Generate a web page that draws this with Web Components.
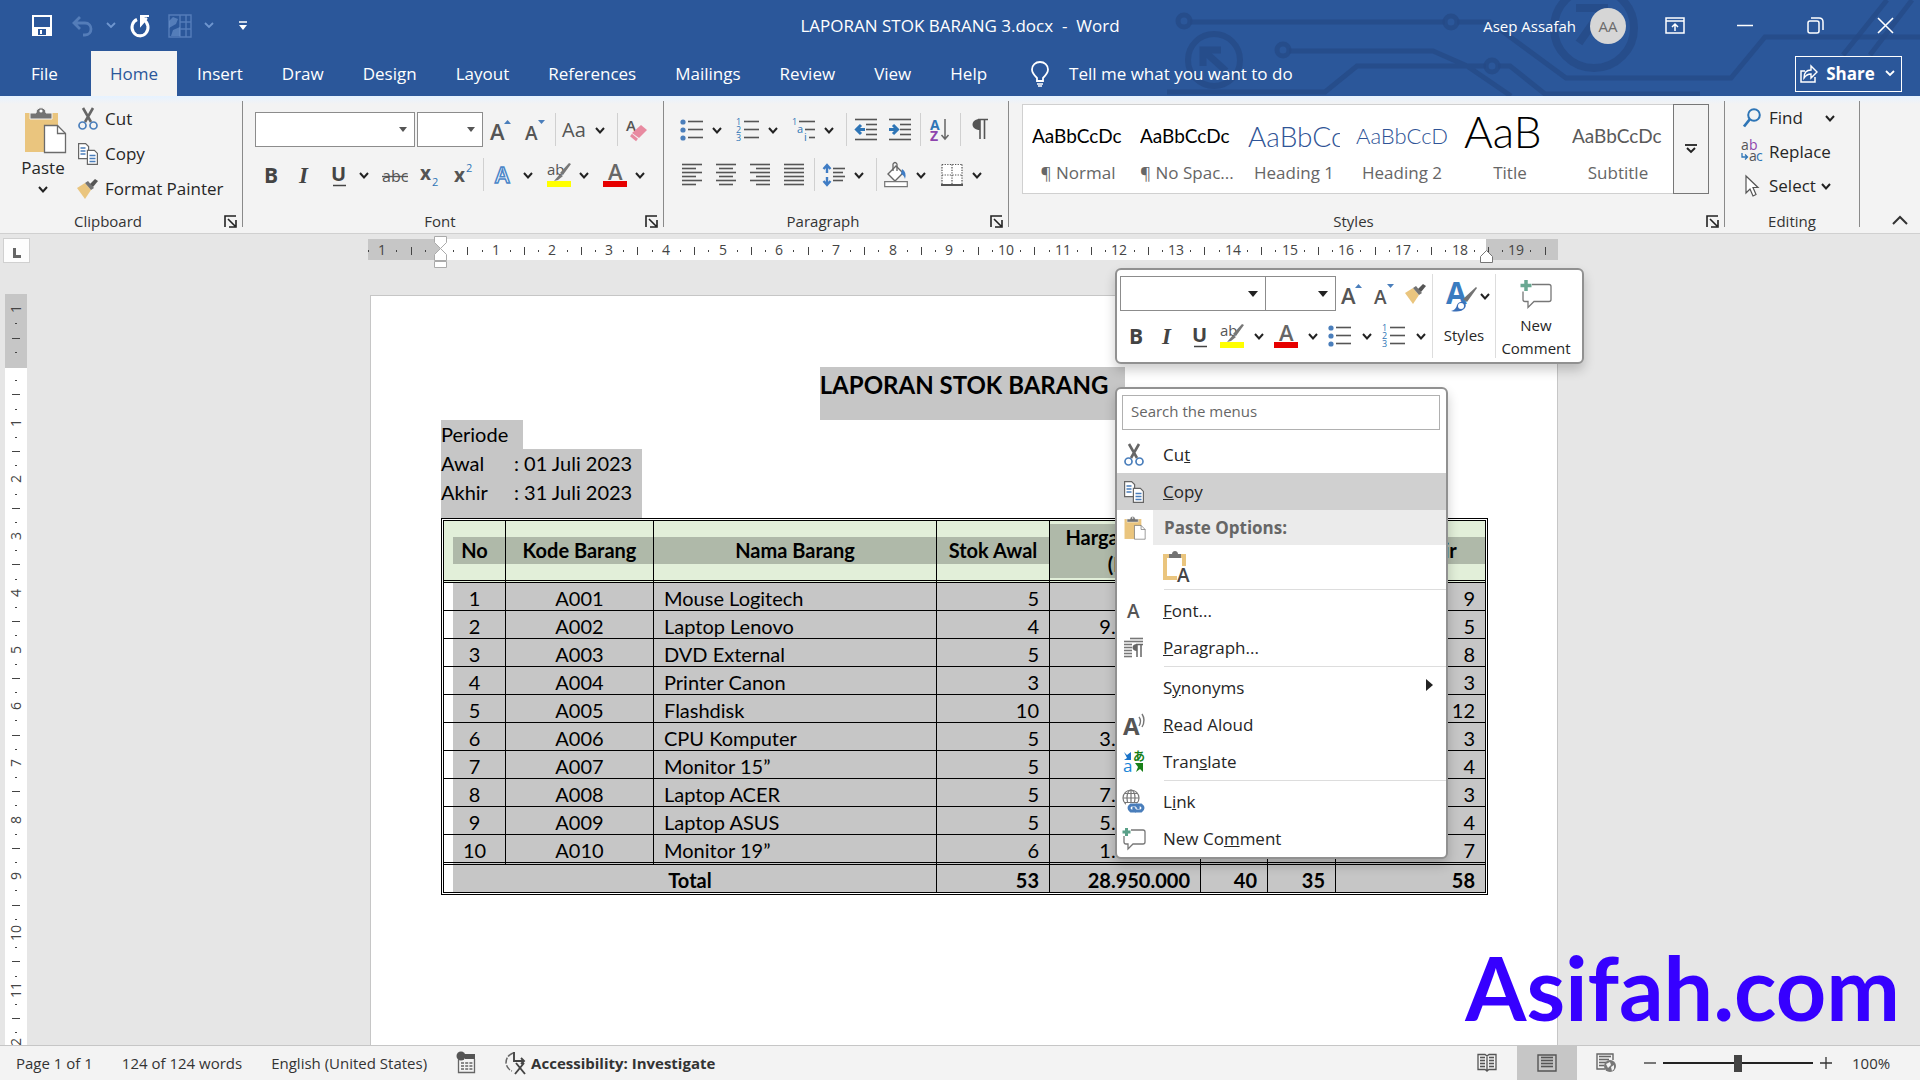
<!DOCTYPE html>
<html lang="en">
<head>
<meta charset="utf-8">
<title>LAPORAN STOK BARANG 3.docx - Word</title>
<style>
html, body { height: 100%; margin: 0; }
body { font: 17px/24px "Open Sans", "Noto Sans", sans-serif; color: #262626; overflow: hidden; }
</style>
</head>
<body>
<word-app></word-app>
<script>
const chevron = c => `<path d="M2 2l5 5 5-5" fill="none" stroke="${c}" stroke-width="2.2"/>`;
const lines = (rows, c = '#555') => rows.map(r => `<path d="M${r[0]} ${r[2]}.5H${r[1]}" stroke="${c}" stroke-width="1.6"/>`).join('');
const txt = (x, y, s, t, extra = '') => `<text x="${x}" y="${y}" font-size="${s}" ${extra}>${t}</text>`;
const clipboard = `<path d="M1 6h33v39H1z" fill="#eac57e"/><path d="M6 12V6h6c0-7 10-7 10 0h6v6z" fill="#737373" stroke="#f3f3f3" stroke-width="1"/><circle cx="17" cy="4" r="1.6" fill="#fff"/><path d="M20.500 18.500h13l8 8v19h-21z" fill="#fff" stroke="#6b6b6b" stroke-width="1.300"/><path d="M33.500 18.500v8h8" fill="none" stroke="#6b6b6b" stroke-width="1.300"/>`;

/* name: [width, height, drawing] */
const ICONS = {
  save: [20, 21, '<path d="M1 1h18v19H1z" fill="none" stroke="#fff" stroke-width="2"/><path d="M1 12h18v8H1z" fill="#fff"/><path d="M6 14h8v6H6z" fill="#2b579a"/><path d="M8 15h2v4H8z" fill="#fff"/>'],
  undo: [22, 22, '<path d="M3 8h11c8 0 8 12 0 12h-2M9 2L3 8l6 6" fill="none" stroke="#6f96cf" stroke-width="2.8" opacity=".6"/>'],
  redo: [20, 22, '<path d="M7 4.500A8 8.500 0 1 0 14 5" fill="none" stroke="#fff" stroke-width="3"/><path d="M10 1h9M11 1v9l6-7" fill="#fff" stroke="#fff" stroke-width="2"/>'],
  pages: [24, 24, '<g fill="none" stroke="#6f96cf" stroke-width="1.400" opacity=".6"><path d="M1 1h11v22H1zM12 1h11v22H12zM12 8h11M12 15h11M18 1v22"/></g><path d="M1 7l4-4 5 2-2 5-7 4zM3 22l2-6 7-3v9z" fill="#6f96cf" opacity=".6"/>'],
  customise: [8, 10, '<path d="M0 1h8" stroke="#fff" stroke-width="1.500"/><path d="M0 4h8l-4 5z" fill="#fff"/>'],
  chevW: [14, 9, '<path d="M3 2l4 4 4-4" fill="none" stroke="#fff" stroke-width="1.800"/>'], chevF: [14, 9, '<path d="M3 2l4 4 4-4" fill="none" stroke="#6f96cf" stroke-width="1.800"/>'], chev: [14, 9, '<path d="M3 2l4 4.500 4-4.500" fill="none" stroke="#222" stroke-width="2"/>'],
  up: [16, 10, '<path d="M1 9l7-7 7 7" fill="none" stroke="#333" stroke-width="2"/>'],
  bulb: [18, 26, '<path d="M6 20v-3C3 14 1 12 1 8.500 1 4 4.500 1 9 1s8 3 8 7.500c0 3.500-2 5.500-5 8.500v3z" fill="none" stroke="#fff" stroke-width="1.800"/><path d="M6 23h6M7 25h4" stroke="#fff" stroke-width="1.500"/>'],
  ribbonopt: [20, 17, '<path d="M1 1h18v15H1zM1 4h18M10 14V7M7 10l3-3 3 3" fill="none" stroke="#fff" stroke-width="1.500"/>'],
  min: [16, 3, '<path d="M0 1.500h16" stroke="#fff" stroke-width="1.500"/>'],
  restore: [17, 17, '<rect x="1" y="4" width="11" height="12" rx="2" fill="none" stroke="#fff" stroke-width="1.500"/><path d="M4 1h8q4 0 4 4v8" fill="none" stroke="#fff" stroke-width="1.500"/>'],
  close: [17, 17, '<path d="M1 1l15 15M16 1L1 16" stroke="#fff" stroke-width="1.600"/>'],
  share: [18, 18, '<path d="M5 6H1v11h14v-5" fill="none" stroke="#fff" stroke-width="1.500"/><path d="M4 13c0-6 3-8 7-8V1l6 6-6 6V9c-3 0-5 1-7 4z" fill="none" stroke="#fff" stroke-width="1.400"/>'],
  paste: [42, 46, clipboard],
  pasteS: [22, 24, `<g transform="scale(.51)">${clipboard}</g>`],
  pasteA: [28, 32, '<path d="M3 5h19v22H3z" fill="#fff" stroke="#eac57e" stroke-width="4"/><path d="M7 7V3h3c0-4 6-4 6 0h3v4z" fill="#737373"/><path d="M15 15h13v17H15z" fill="#fff"/>' + txt(15, 31, 19, 'A', 'fill="#444" font-weight="600"')],
  cut: [20, 22, '<path d="M5 0l8 14M15 0L7 14" stroke="#666" stroke-width="2.600"/><circle cx="4.500" cy="17.500" r="3.500" fill="none" stroke="#4a7ebb" stroke-width="1.700"/><circle cx="15.500" cy="17.500" r="3.500" fill="none" stroke="#4a7ebb" stroke-width="1.700"/>'],
  copy: [20, 22, '<g fill="#fff" stroke="#666" stroke-width="1.200"><path d="M.6.600h7l3 3v12h-10z"/><path d="M9.400 7.400h7l3 3v11h-10z"/></g><path d="M2.500 5h5M2.500 8h5M2.500 11h5M11.500 12.500h6M11.500 15.500h6M11.500 18.500h6" stroke="#4a7ebb" stroke-width="1.300"/>'],
  painter: [22, 21, '<path d="M0 10l8-5 6 7-6 9z" fill="#eac57e"/><path d="M8 5l3-2 6 7-3 2z" fill="#737373"/><path d="M13 6l5-5 3 2-5 6z" fill="#555"/>'],
  grow: [22, 22, txt(0, 21, 22, 'A', 'fill="#555" font-weight="600"') + '<path d="M14 5h7l-3.500-4z" fill="#4a7ebb"/>'],
  shrink: [20, 22, txt(0, 21, 19, 'A', 'fill="#555" font-weight="600"') + '<path d="M13 1h7l-3.500 4z" fill="#4a7ebb"/>'],
  aa: [26, 22, txt(0, 18, 20, 'Aa', 'fill="#555"')],
  eraser: [22, 24, txt(0, 13, 15, 'A', 'fill="#555" font-weight="600"') + '<path d="M6 15L15 7l6 5-8 8z" fill="#e88aa0"/><path d="M5 17l6 5" stroke="#e88aa0" stroke-width="3"/>'],
  bold: [16, 22, txt(1, 19, 21, 'B', 'fill="#444" font-weight="700"')],
  italic: [14, 22, txt(1, 19, 23, 'I', 'fill="#444" font-weight="700" font-style="italic" font-family="Liberation Serif"')],
  under: [18, 24, txt(1, 18, 20, 'U', 'fill="#444" font-weight="700"') + '<path d="M3 22.500h13" stroke="#444" stroke-width="1.500"/>'],
  strike: [26, 22, txt(0, 18, 16, 'abc', 'fill="#555"') + '<path d="M0 12.500h26" stroke="#555" stroke-width="1.400"/>'],
  sub: [18, 24, txt(0, 17, 19, 'x', 'fill="#555" font-weight="700"') + txt(12, 23, 11, '2', 'fill="#2e75b6"')],
  sup: [18, 24, txt(0, 19, 19, 'x', 'fill="#555" font-weight="700"') + txt(12, 9, 11, '2', 'fill="#2e75b6"')],
  effect: [16, 24, txt(0, 20, 22, 'A', 'fill="#fff" stroke="#4a86c8" stroke-width="1.500" font-weight="600"')],
  hilite: [24, 26, txt(0, 13, 15, 'ab', 'fill="#555"') + '<path d="M24 2L16 13l-3-2 9-10z" fill="#777"/><path d="M13 12l3 2-5 4-4 1z" fill="#777"/><path d="M0 19h24v6H0z" fill="#ff0"/>'],
  fcolor: [24, 26, txt(5, 18, 22, 'A', 'fill="#666" font-weight="600"') + '<path d="M0 19h24v6H0z" fill="#e60000"/>'],
  bullets: [24, 24, '<g fill="#4a7ebb"><circle cx="3" cy="4" r="2.600"/><circle cx="3" cy="12" r="2.600"/><circle cx="3" cy="20" r="2.600"/></g>' + lines([[8, 23, 3], [8, 23, 11], [8, 23, 19]])],
  numbers: [24, 24, `<g fill="#2e75b6">${txt(0, 7, 9, '1') + txt(0, 15, 9, '2') + txt(0, 23, 9, '3')}</g>` + lines([[8, 23, 3], [8, 23, 11], [8, 23, 19]])],
  multi: [24, 24, `<g fill="#2e75b6">${txt(0, 7, 9, '1') + txt(5, 15, 11, 'a') + txt(12, 23, 11, 'i')}</g>` + lines([[7, 23, 3], [13, 23, 11], [17, 23, 19]])],
  outdent: [22, 24, lines([[0, 22, 1], [11, 22, 6], [11, 22, 11], [11, 22, 16], [0, 22, 21]]) + '<path d="M10 11.500H3M6 7l-4.500 4.500L6 16" fill="none" stroke="#2e75b6" stroke-width="3"/>'],
  indent: [22, 24, lines([[0, 22, 1], [11, 22, 6], [11, 22, 11], [11, 22, 16], [0, 22, 21]]) + '<path d="M0 11.500h7M4 7l4.500 4.500L4 16" fill="none" stroke="#2e75b6" stroke-width="3"/>'],
  sort: [20, 24, txt(0, 12, 14, 'A', 'fill="#2e75b6" font-weight="700"') + txt(0, 23, 14, 'Z', 'fill="#8e44ad" font-weight="700"') + '<path d="M15 1v20M11.500 17l3.500 4 3.500-4" fill="none" stroke="#666" stroke-width="1.500"/>'],
  pilcrow: [18, 24, '<path d="M7 1.500h10M9 1v20M13.500 1v20" stroke="#555" stroke-width="1.600"/><path d="M9 1C-1 1-1 12 9 12z" fill="#555"/>'],
  left: [20, 24, lines([[0, 20, 1], [0, 14, 5], [0, 20, 9], [0, 14, 13], [0, 20, 17], [0, 14, 21]])],
  center: [20, 24, lines([[0, 20, 1], [3, 17, 5], [0, 20, 9], [3, 17, 13], [0, 20, 17], [3, 17, 21]])],
  right: [20, 24, lines([[0, 20, 1], [6, 20, 5], [0, 20, 9], [6, 20, 13], [0, 20, 17], [6, 20, 21]])],
  justify: [20, 24, lines([[0, 20, 1], [0, 20, 5], [0, 20, 9], [0, 20, 13], [0, 20, 17], [0, 20, 21]])],
  spacing: [24, 24, '<path d="M5 2v8M5 14v8M1.500 6L5 2l3.500 4M1.500 18L5 22l3.500-4" fill="none" stroke="#3f7cc4" stroke-width="2.400"/>' + lines([[11, 23, 5], [11, 21, 9], [11, 23, 13], [11, 21, 17]])],
  bucket: [24, 26, '<path d="M4 12l8-8 7 7-8 8z" fill="#fff" stroke="#666" stroke-width="1.400"/><path d="M9 9V2q2-3 4 0v7" fill="none" stroke="#666" stroke-width="1.300"/><path d="M18 7q5 3 3 10-1-4-4-5z" fill="#3f7cc4"/><path d="M.700 19.700h22.600v5H.700z" fill="#fff" stroke="#777" stroke-width="1.200"/>'],
  borders: [22, 24, '<path d="M1 1h20v20H1z" fill="#fff"/><path d="M1 1.500h20M1 12h20M1 1.500v20M11 1.500v20M21 1.500v20" stroke="#555" stroke-width="1.200" stroke-dasharray="1.300 1.300"/><path d="M0 22h22" stroke="#555" stroke-width="2"/>'],
  launcher: [13, 13, '<path d="M1 12V1h11M4 4l7 7M12 5v7H5" fill="none" stroke="#222" stroke-width="1.600"/>'],
  more: [12, 10, '<path d="M0 1h12" stroke="#222" stroke-width="1.800"/><path d="M2 4l4 4 4-4" fill="none" stroke="#222" stroke-width="1.900"/>'],
  find: [18, 20, '<circle cx="11" cy="7" r="5.800" fill="none" stroke="#2e75b6" stroke-width="2"/><path d="M7 11l-6 7.500" stroke="#2e75b6" stroke-width="2.800"/>'],
  replace: [22, 24, txt(0, 10, 14, 'a', 'fill="#555"') + txt(8, 10, 14, 'b', 'fill="#8e44ad"') + txt(8, 21, 14, 'a', 'fill="#555"') + txt(15, 21, 14, 'c', 'fill="#2e75b6"') + '<path d="M1 13v4h5M4 14.500l2.500 2.500L4 19.500" fill="none" stroke="#2e75b6" stroke-width="1.300"/>'],
  pointer: [14, 22, '<path d="M1 1v17l4-4 3 7 3-1.500-3-7h5z" fill="#fff" stroke="#555" stroke-width="1.200"/>'],
  arrow: [8, 5, '<path d="M0 0h8L4 5z" fill="#555"/>'], arrowB: [10, 6, '<path d="M0 0h10L5 6z" fill="#222"/>'],
  stylesA: [32, 34, txt(0, 25, 30, 'A', 'fill="#3a7cc0" font-weight="700"') + '<path d="M31 9L21 23l-4-3L30 8z" fill="#737373"/><path d="M5 32q5-1 6-6 2-4 7-3 3 2 1 6-4 5-14 3z" fill="#3a6fb8"/><circle cx="15" cy="27" r="3" fill="#fff"/>'],
  comment: [32, 30, '<path d="M12 5.500h17q2 0 2 2v13q0 2-2 2H14l-6 6v-6H5q-2 0-2-2v-8" fill="none" stroke="#777" stroke-width="1.300"/><path d="M6 1v11M.500 6.500h11" stroke="#6aa892" stroke-width="3.500"/>'],
  commentS: [24, 23, '<path d="M9 3h12q2 0 2 2v10q0 2-2 2H11l-5 5v-5H4q-2 0-2-2V9" fill="none" stroke="#777" stroke-width="1.300"/><path d="M4.500 1v8M.500 5h8" stroke="#5aa088" stroke-width="3"/>'],
  fontA: [14, 18, txt(0, 16, 19, 'A', 'fill="#555" font-weight="600"')],
  para: [20, 22, lines([[6, 19, 1], [0, 19, 4], [0, 8, 7], [0, 8, 10], [0, 8, 13], [0, 8, 16], [0, 8, 19]], '#777') + '<path d="M13 7v13M17 7v13M12 7.500h7" stroke="#666" stroke-width="1.500"/><path d="M13 7C7 7 7 14 13 14z" fill="#666"/>'],
  read: [22, 24, txt(0, 22, 24, 'A', 'fill="#555" font-weight="700"') + '<path d="M16 4q3 4 0 9M19 1q4 6 0 13" fill="none" stroke="#777" stroke-width="1.400"/>'],
  translate: [22, 24, '<path d="M1 2l3 3 4-3v8H1l3-2z" fill="#1a73c8"/>' + txt(0, 22, 17, 'a', 'fill="#1a86d8"') + txt(10, 11, 12, 'あ', 'fill="#188018" font-weight="700" font-family="Noto Sans CJK JP"') + '<path d="M12 13h8v9l-3-3-4 3 2-5z" fill="#188018"/>'],
  link: [24, 26, '<g fill="none" stroke="#777" stroke-width="1.200"><circle cx="9" cy="9" r="8"/><ellipse cx="9" cy="9" rx="4" ry="8"/><path d="M1 9h16M3 4.500h12M3 13.500h12M9 1v16"/></g><path d="M4 14h20v10H4z" fill="#fff"/><g fill="none" stroke="#4a7ebb" stroke-width="3"><path d="M14 22H9q-4-3 0-6h5q3 1 2 4"/><path d="M14 16h5q4 3 0 6h-5q-3-1-2-4" /></g>'],
  sub_arrow: [7, 12, '<path d="M0 0v12l7-6z" fill="#222"/>'],
  proof: [20, 24, '<circle cx="5" cy="5" r="4.500" fill="#555"/><path d="M9 3h10v5H9z" fill="#555"/><path d="M2.500 9v12.500h16V8" fill="none" stroke="#666" stroke-width="1.300"/><path d="M5 12h12M5 15h12M5 18h12" stroke="#666" stroke-width="1.300" stroke-dasharray="3 1.200"/>'],
  access: [22, 24, '<path d="M8 2Q1 5 1 12q1 6 6 8" fill="none" stroke="#666" stroke-width="1.500" stroke-dasharray="6 1.500"/><path d="M9 1v9h10M16 7l3 3-3 3M11 12l9 11M19 12l-9 11" fill="none" stroke="#444" stroke-width="1.900"/>'],
  reading: [20, 20, '<path d="M1 1.500h7l2 1.500 2-1.500h7v15h-7l-2 1.500-2-1.500H1zM10 2v17" fill="none" stroke="#555" stroke-width="1.300"/>' + lines([[3, 8, 4], [3, 8, 7], [3, 8, 10], [3, 8, 13], [12, 17, 4], [12, 17, 7], [12, 17, 10], [12, 17, 13]], '#555')],
  print: [20, 18, '<path d="M1 1h18v16H1z" fill="none" stroke="#555" stroke-width="1.400"/>' + lines([[4, 16, 3], [4, 16, 6], [4, 16, 9], [4, 16, 12]], '#555')],
  web: [22, 20, '<path d="M17 7V1H1v15h8" fill="none" stroke="#666" stroke-width="1.400"/>' + lines([[3, 15, 3], [3, 13, 6], [3, 10, 9], [3, 8, 12]], '#666') + '<circle cx="14" cy="13" r="6" fill="#777"/><path d="M10 11l4-2 1 3-3 3zM15 14l3-2v4l-2 2z" fill="#f3f3f3"/>'],
  minus: [12, 12, '<path d="M0 6h12" stroke="#333" stroke-width="1.300"/>'],
  plus: [12, 12, '<path d="M0 6h12M6 0v12" stroke="#333" stroke-width="1.300"/>'],
  tabstop: [8, 10, '<path d="M1.500 0v8.500H8" fill="none" stroke="#666" stroke-width="3"/>']
};

function define(name, html, setup) {
  const t = document.createElement('template');
  t.innerHTML = html;
  customElements.define(name, class extends HTMLElement {
    constructor() {
      super();
      this.attachShadow({ mode: 'open' }).append(t.content.cloneNode(true));
    }
    connectedCallback() {
      if (setup && !this.ready) { this.ready = true; setup(this, this.shadowRoot); }
    }
  });
}
const $ = (r, s) => r.querySelector(s);
const icon = n => `<ui-icon name="${n}"></ui-icon>`;

define('ui-icon', `<style>:host{display:inline-flex;flex:none}svg{display:block;overflow:visible;font-family:"Open Sans",sans-serif}</style><span></span>`, (el, r) => {
  const [w, h, d] = ICONS[el.getAttribute('name')];
  $(r, 'span').innerHTML = `<svg aria-hidden="true" width="${w}" height="${h}" viewBox="0 0 ${w} ${h}">${d}</svg>`;
});

/* Icon-only button; "drop" makes the narrow chevron that opens a menu. */
define('tool-button', `<style>
:host{display:flex;flex:none;width:var(--tool,34px);height:35px}
:host([drop]){width:22px}
button{all:unset;flex:1;display:flex;align-items:center;justify-content:center}
:host([drop]) button{padding:2px var(--drop,6px) 0 0}
</style><button></button>`, (el, r) => {
  const b = $(r, 'button');
  b.setAttribute('aria-label', el.getAttribute('label') || 'More options');
  b.innerHTML = icon(el.getAttribute('icon') || 'chev');
});

define('tool-sep', `<style>:host{display:flex;flex:none;width:6px;justify-content:center;height:33px;align-self:center}i{width:1px;background:#d0d0d0}</style><i></i>`);

define('combo-box', `<style>
:host{display:grid;flex:none;height:35px;box-sizing:border-box;border:1px solid #8c8c8c;background:#fff;align-items:center}
select{grid-area:1/1;appearance:none;border:0;background:none;width:100%;height:100%;font:inherit;outline:0}
span{grid-area:1/1;justify-self:end;margin-right:7px;display:flex;pointer-events:none}
</style><select><option></option></select><span></span>`, (el, r) => {
  $(r, 'select').setAttribute('aria-label', el.getAttribute('label'));
  $(r, 'span').innerHTML = icon(el.getAttribute('arrow') || 'arrow');
});

/* Icon followed by its text. */
define('labeled-button', `<style>
:host{display:flex;height:var(--row,35px)}
button{all:unset;display:flex;align-items:center;gap:5px;white-space:nowrap}
.i{width:24px;display:flex;justify-content:center}
</style><button><span class="i"></span><slot></slot></button>`, (el, r) => {
  $(r, '.i').innerHTML = icon(el.getAttribute('icon'));
});

define('ribbon-group', `<style>
:host{display:grid;grid-template:1fr 26px / 1fr 1px;flex:none}
:host([wide]){flex:1;min-width:0}
.body{min-width:0}
.foot{display:flex;align-items:center;font-size:15px;color:#333;padding-top:2px}
.foot span{flex:1;text-align:center}
.foot button{all:unset;width:26px;display:flex;padding-left:8px;box-sizing:border-box}
:host([plain]) .foot button{display:none}
i{grid-area:1/2/3/3;margin:5px 0 6px;background:#8a8a8a}
</style><div class="body"><slot></slot></div><div class="foot"><span></span><button aria-label="Dialog launcher">${icon('launcher')}</button></div><i></i>`, (el, r) => {
  $(r, '.foot span').textContent = el.getAttribute('label');
});

define('title-bar', `<style>
:host{display:block;position:relative;background:#2b579a;color:#fff;height:96px;overflow:hidden}
.art{position:absolute;top:0;right:0}
.top,.tabs{position:relative;display:flex;align-items:center}
.top{height:51px;display:grid;grid-template-columns:1fr auto 1fr}
.top>b{font-weight:400;white-space:pre}
button{all:unset;display:flex;align-items:center;justify-content:center}
.qat,.win{display:flex;align-items:center}
.qat{padding-left:22px}
.qat button{width:40px;height:40px}.qat .d{width:18px}.qat .e{width:50px}
.win{justify-content:flex-end}
.who{font-size:15px}
.av{width:36px;height:36px;border-radius:50%;background:#d6d6d6;color:#6b6b6b;font-size:15px;display:flex;align-items:center;justify-content:center;margin:0 14px}
.win button{width:70px;height:40px}
.tabs{height:45px}
.tabs a{color:inherit;text-decoration:none;height:45px;display:flex;align-items:center;padding:0 19px 0 20px}
.tabs a.file{padding:0 33px 0 31px}
.tabs a.on{background:#f3f3f3;color:#2b579a;padding:0 19px}
.tabs .tell{padding-left:25px;gap:20px}
.share{margin:0 18px 0 auto;width:105px;height:34px;border:1px solid #fff;gap:8px;font-weight:700}
</style>
<svg class="art" width="760" height="96" viewBox="1160 0 760 96" fill="none" stroke="#264a86" stroke-opacity=".75" aria-hidden="true">
<g stroke-width="5"><circle cx="1184" cy="21" r="6"/><path d="M1190 22H1445M1457 22H1490L1566 78H1731L1765 37H1920"/><circle cx="1451" cy="22" r="6"/><circle cx="1283" cy="50" r="6"/><path d="M1289 51H1433L1467 66 1511 96M1167 92H1325L1357 66H1486M1498 66H1510L1545 94H1700"/><circle cx="1492" cy="66" r="6"/><path d="M1843 55L1887 0M1870 55L1912 0"/></g>
<circle cx="1214" cy="60" r="26" stroke-width="6"/><path d="M1203 66V50h18M1204 51l22 20" stroke-width="7"/>
<circle cx="1594" cy="28" r="40" stroke-width="8"/><path d="M1576 8h28v26M1603 9l-24 34" stroke-width="8"/></svg>
<div class="top">
<div class="qat"><button aria-label="Save">${icon('save')}</button><button aria-label="Undo">${icon('undo')}</button><button class="d" aria-label="Undo list">${icon('chevF')}</button><button aria-label="Repeat">${icon('redo')}</button><button aria-label="Pages">${icon('pages')}</button><button class="d" aria-label="Pages list">${icon('chevF')}</button><button class="e" aria-label="Customize">${icon('customise')}</button></div>
<b>LAPORAN STOK BARANG 3.docx  -  Word</b>
<div class="win"><span class="who">Asep Assafah</span><span class="av">AA</span><button aria-label="Ribbon display">${icon('ribbonopt')}</button><button aria-label="Minimize">${icon('min')}</button><button aria-label="Restore">${icon('restore')}</button><button aria-label="Close">${icon('close')}</button></div>
</div>
<nav class="tabs"><a class="file" href="#">File</a><a class="on" href="#">Home</a><a href="#">Insert</a><a href="#">Draw</a><a href="#">Design</a><a href="#">Layout</a><a href="#">References</a><a href="#">Mailings</a><a href="#">Review</a><a href="#">View</a><a href="#">Help</a><button class="tell">${icon('bulb')}Tell me what you want to do</button><button class="share">${icon('share')}Share${icon('chevW')}</button></nav>`);

define('style-gallery', `<style>
:host{display:flex;margin:8px 15px 0 13px;height:90px}
.list{flex:1;display:flex;background:#fff;border:1px solid #d0d0d0;border-right:0;padding-left:1px;overflow:hidden}
.list button{all:unset;width:108px;box-sizing:border-box;padding:0 8px;display:flex;flex-direction:column;overflow:hidden}
.s{font-family:Lato,sans-serif;font-size:19px;color:#000;height:42px;margin-top:10px;line-height:42px;overflow:hidden;white-space:nowrap}
.n{font-size:17px;line-height:24px;color:#666;text-align:center;white-space:nowrap;margin-top:4px}
.h1{font-size:28px;font-weight:300;color:#2f5496}.h2{font-size:22px;font-weight:300;color:#2f5496}.t{font-size:44px;font-weight:300;line-height:32px}.sb{color:#5a5a5a}
.more{all:unset;width:34px;border:1px solid #777;display:flex;align-items:center;justify-content:center}
</style><div class="list"><button><span class="s">AaBbCcDc</span><span class="n">¶ Normal</span></button><button><span class="s">AaBbCcDc</span><span class="n">¶ No Spac...</span></button><button><span class="s h1">AaBbCc</span><span class="n">Heading 1</span></button><button><span class="s h2">AaBbCcD</span><span class="n">Heading 2</span></button><button><span class="s t">AaB</span><span class="n">Title</span></button><button><span class="s sb">AaBbCcDc</span><span class="n">Subtitle</span></button></div><button class="more" aria-label="More styles">${icon('more')}</button>`);

const tools = s => s.split(' ').map(n => n === '|' ? '<tool-sep></tool-sep>' : n === 'v' ? '<tool-button drop></tool-button>' : `<tool-button icon="${n}" label="${n}"></tool-button>`).join('');

define('word-ribbon', `<style>
:host{display:flex;height:137px;background:linear-gradient(#e6f2ff,#f3f3f3 8px);border-bottom:1px solid #d0d0d0}
.clip{display:flex;padding-left:11px;width:231px}
.paste{all:unset;width:64px;display:flex;flex-direction:column;align-items:center;padding-top:11px}
.paste span{margin:3px 0 5px}
.paste ui-icon:first-child{margin-left:4px}
.col{padding:5px 0 0 1px}
.tools{padding:16px 0 0 11px;display:flex;flex-direction:column;gap:10px;box-sizing:border-box}
.tools div{display:flex}
.font{width:420px}.par{width:344px}
.f1{width:160px;margin:0 2px 0 1px}.f2{width:66px;margin-right:1px}
.edit{width:134px;box-sizing:border-box;padding:5px 0 0 15px;--row:34px}
.edit div{display:flex;align-items:center;gap:3px}
.edit .fd{gap:20px}
.end{flex:none;width:60px;display:flex;align-items:flex-end;justify-content:center}
.end button{all:unset;padding:0 0 2px 20px}
</style>
<ribbon-group label="Clipboard"><div class="clip"><button class="paste">${icon('paste')}<span>Paste</span>${icon('chev')}</button><div class="col"><labeled-button icon="cut">Cut</labeled-button><labeled-button icon="copy">Copy</labeled-button><labeled-button icon="painter">Format Painter</labeled-button></div></div></ribbon-group>
<ribbon-group label="Font"><div class="tools font"><div><combo-box class="f1" label="Font"></combo-box><combo-box class="f2" label="Font size"></combo-box>${tools('grow shrink | aa v | eraser')}</div><div>${tools('bold italic under v strike sub sup | effect v hilite v fcolor v')}</div></div></ribbon-group>
<ribbon-group label="Paragraph"><div class="tools par"><div>${tools('bullets v numbers v multi v | outdent indent | sort | pilcrow')}</div><div>${tools('left center right justify | spacing v | bucket v borders v')}</div></div></ribbon-group>
<ribbon-group label="Styles" wide><style-gallery></style-gallery></ribbon-group>
<ribbon-group label="Editing" plain><div class="edit"><div class="fd"><labeled-button icon="find">Find</labeled-button>${icon('chev')}</div><labeled-button icon="replace">Replace</labeled-button><div><labeled-button icon="pointer">Select</labeled-button>${icon('chev')}</div></div></ribbon-group>
<div class="end"><button aria-label="Collapse the ribbon">${icon('up')}</button></div>`);

/* Centimetre ruler; a mark every quarter of CM from the zero point. */
const CM = 56.7;
define('doc-ruler', `<style>
:host{display:block;background:#fff}svg{display:block;overflow:visible;font-family:"Open Sans",sans-serif;font-size:14px;fill:#444}
:host([vertical]){overflow:hidden}
</style><span></span>`, (el, r) => {
  const v = el.hasAttribute('vertical');
  let out = '';
  const zero = 72, from = v ? -4 : -5, to = v ? 49 : 78, len = v ? 760 : 1190;
  out += v ? `<path d="M0 0h22v74H0z" fill="#c6c6c6"/>` : `<path d="M0 0h72v21H0zM1118 0h72v21h-72z" fill="#c6c6c6"/>`;
  for (let q = from; q <= to; q++) {
    const p = Math.round(zero + q * CM / 4) - 1;
    if (q === 0) continue;
    if (q % 4 === 0) out += v ? `<text transform="translate(16 ${p + 1}) rotate(-90)" text-anchor="middle">${Math.abs(q / 4)}</text>` : `<text x="${p}" y="16" text-anchor="middle">${Math.abs(q / 4)}</text>`;
    else { const h = q % 2 === 0 ? 4 : 1; out += v ? `<path d="M${11 - h} ${p + 1}h${2 * h}v1h-${2 * h}z"/>` : `<path d="M${p} ${12 - h}h1v${2 * h}h-1z"/>`; }
  }
  if (!v) out += '<g fill="#fff" stroke="#aaa"><path d="M66.500-2.500h12v6l-6 6-6-6zM66.500 21.500v-6l6-6 6 6v6zM66.500 22.500h12v6h-12z"/><path d="M1112.500 23.500v-6l6-6 6 6v6z" stroke="#777"/></g>';
  $(r, 'span').innerHTML = `<svg aria-hidden="true" width="${v ? 22 : len}" height="${v ? len : 21}">${out}</svg>`;
});

const ROWS = [
  ['Mouse Logitech', 5, '100.000', 6, 2, 9], ['Laptop Lenovo', 4, '9.500.000', 4, 3, 5], ['DVD External', 5, '350.000', 6, 3, 8],
  ['Printer Canon', 3, '650.000', 3, 3, 3], ['Flashdisk', 10, '50.000', 5, 3, 12], ['CPU Komputer', 5, '3.500.000', 2, 4, 3],
  ['Monitor 15”', 5, '300.000', 3, 4, 4], ['Laptop ACER', 5, '7.500.000', 3, 5, 3], ['Laptop ASUS', 5, '5.500.000', 3, 4, 4], ['Monitor 19”', 6, '1.500.000', 5, 4, 7]];

define('stock-table', `<style>
:host{display:flex}
table{flex:none;border:3px double #000;border-spacing:0;table-layout:fixed;width:1047px;font:20px/24px Lato,sans-serif;color:#000}
th,td{padding:0 10px;border-right:1px solid #000;border-bottom:1px solid #000;box-sizing:border-box;height:28px}
td{background:#c6c6c6;text-align:right;padding-top:2px}
tr>:last-child{border-right:0}
th{background:#e2efd9;padding:0;height:31px;line-height:27px}
thead th.r{border-bottom:3px double #000}
thead th.e{border-right:0}
thead th.m{border-right:1px solid #000}
th span{display:block;background:#afb9a9}
.k{text-align:center}.l{text-align:left}
tr>.first{background:linear-gradient(90deg,#fff 9px,#c6c6c6 9px)}
th.first{background:#e2efd9}th.first span{margin-left:9px;padding-right:9px}
tbody tr:last-child td{border-bottom:3px double #000;height:30px}
tfoot td{border-bottom:0;font-weight:700;height:27px}
.marks{width:13px;margin-left:1px;padding-top:3px;display:flex;flex-direction:column;gap:1px}
.marks i{height:27px;background:#c6c6c6}.marks i:nth-child(-n+2){height:31px}
</style>
<table><colgroup><col style="width:62px"><col style="width:148px"><col style="width:283px"><col style="width:113px"><col style="width:151px"><col style="width:67px"><col style="width:68px"><col></colgroup>
<thead><tr><th class="r first" rowspan="2"><span>No</span></th><th class="r" rowspan="2"><span>Kode Barang</span></th><th class="r" rowspan="2"><span>Nama Barang</span></th><th class="r" rowspan="2"><span>Stok Awal</span></th><th class="r" rowspan="2"><span>Harga Satuan<br>(Rp)</span></th><th class="m" colspan="2"><span>Stok</span></th><th class="r e" rowspan="2"><span>Stok Akhir</span></th></tr><tr><th class="r"><span>Masuk</span></th><th class="r m"><span>Keluar</span></th></tr></thead>
<tbody></tbody>
<tfoot><tr><td class="k first" colspan="3">Total</td><td>53</td><td>28.950.000</td><td>40</td><td>35</td><td>58</td></tr></tfoot></table><div class="marks"></div>`, (el, r) => {
  $(r, 'tbody').innerHTML = ROWS.map((w, i) => `<tr><td class="k first">${i + 1}</td><td class="k">A0${String(i + 1).padStart(2, '0')}</td><td class="l">${w[0]}</td>${w.slice(1).map(c => `<td>${c}</td>`).join('')}</tr>`).join('');
  $(r, '.marks').innerHTML = '<i></i>'.repeat(13);
});

define('doc-page', `<style>
:host{display:block;background:#fff;border:1px solid #c6c6c6;border-bottom:0;box-sizing:border-box;padding:71px 70px 0;font:20px/29px Lato,sans-serif;color:#000}
h1{margin:0;font-size:24px;line-height:35px;display:flex;justify-content:center;height:53px}
h1 span{background:#c6c6c6;height:53px;padding-right:17px;margin-right:-17px}
p{margin:0;display:flex}
p span{background:#c6c6c6;width:201px;display:flex}
p.a span{width:82px}
p.z span{padding-bottom:11px}
p b{font-weight:400;width:73px}
</style><h1><span>LAPORAN STOK BARANG</span></h1><p class="a"><span>Periode</span></p><p><span><b>Awal</b>: 01 Juli 2023</span></p><p class="z"><span><b>Akhir</b>: 31 Juli 2023</span></p><stock-table></stock-table>`);

define('doc-workspace', `<style>
:host{display:grid;grid-template:60px 1fr / 32px 1fr;background:#e6e6e6;flex:1;min-height:0;overflow:hidden}
.tab{margin:4px 2px 31px 3px;background:#fdfdfd;border:1px solid #d0d0d0;display:flex;align-items:center;justify-content:center;padding-top:4px}
.h,.p{display:flex;justify-content:center}
.h{padding:5px 26px 0 0;align-items:flex-start}
.p{padding-right:24px}
doc-ruler{width:1190px}doc-ruler[vertical]{width:22px;margin-left:5px}
doc-page{width:1188px;margin-top:1px}
.v,.p{min-height:0;display:flex}
</style><div class="tab">${icon('tabstop')}</div><div class="h"><doc-ruler></doc-ruler></div><div class="v"><doc-ruler vertical></doc-ruler></div><div class="p"><doc-page></doc-page></div>`);

define('status-bar', `<style>
:host{display:flex;align-items:stretch;height:34px;background:#f3f3f3;border-top:1px solid #c6c6c6;font-size:15px;color:#333}
div{display:flex;align-items:center}
.l{padding-left:16px;gap:29px}.r{margin-left:auto}
button{all:unset;display:flex;align-items:center;justify-content:center;gap:4px}
.acc{font-weight:700}
.v{width:60px;align-self:stretch}.on{background:#c6c6c6}
.z{width:26px}
input{appearance:none;width:150px;height:18px;margin:0;background:linear-gradient(#222,#222) center/100% 2px no-repeat}
input::-webkit-slider-thumb{appearance:none;width:8px;height:17px;background:#444}
.pc{width:81px;padding-left:13px;box-sizing:border-box}
</style><div class="l"><span>Page 1 of 1</span><span>124 of 124 words</span><span>English (United States)</span><button aria-label="Proofing">${icon('proof')}</button><button class="acc">${icon('access')}Accessibility: Investigate</button></div>
<div class="r"><button class="v" aria-label="Read mode">${icon('reading')}</button><button class="v on" aria-label="Print layout">${icon('print')}</button><button class="v" aria-label="Web layout">${icon('web')}</button><button class="z" aria-label="Zoom out">${icon('minus')}</button><input type="range" aria-label="Zoom" min="0" max="200" value="100"><button class="z" aria-label="Zoom in">${icon('plus')}</button><span class="pc">100%</span></div>`);

define('mini-toolbar', `<style>
:host{display:flex;box-sizing:border-box;width:469px;height:96px;background:#fff;border:2px solid #919191;border-radius:6px;box-shadow:0 6px 12px #0003;padding:4px 0 4px 3px;--tool:32px;--drop:0px;font-size:15px}
.a div{display:flex}.a{padding-top:2px}
.a div+div{padding-top:7px}
.f1{width:146px}.f2{width:71px;margin-left:-1px}
button{all:unset;display:flex;flex-direction:column;align-items:center;border-left:1px solid #ddd;box-sizing:border-box;line-height:23px;text-align:center}
.s{width:63px;padding-top:5px}.s span{display:flex;align-items:center;margin:0 0 11px 9px}
.c{flex:1;padding:5px 6px 0 0}.c ui-icon{margin-bottom:5px}
</style><div class="a"><div><combo-box class="f1" label="Font" arrow="arrowB"></combo-box><combo-box class="f2" label="Font size" arrow="arrowB"></combo-box>${tools('grow shrink painter')}</div><div>${tools('bold italic under hilite v fcolor v bullets v numbers v')}</div></div><button class="s"><span>${icon('stylesA')}${icon('chev')}</span>Styles</button><button class="c">${icon('comment')}New<br>Comment</button>`);

define('menu-item', `<style>
:host{display:block}
button{all:unset;display:flex;align-items:center;height:37px;width:100%;box-sizing:border-box}
:host([active]) button{background:#d0d0d0}
.i{width:34px;display:flex;justify-content:center;margin-right:12px}
.t{flex:1}
.m{margin-right:13px;margin-top:-6px}
</style><button role="menuitem"><span class="i"></span><span class="t"><slot></slot></span><span class="m"></span></button>`, (el, r) => {
  const n = el.getAttribute('icon');
  if (n) $(r, '.i').innerHTML = icon(n);
  if (el.hasAttribute('submenu')) $(r, '.m').innerHTML = icon('sub_arrow');
});

define('context-menu', `<style>
:host{display:block;box-sizing:border-box;width:333px;background:#fff;border:2px solid #919191;border-radius:6px;box-shadow:0 6px 12px #0003;padding-top:6px}
input{display:block;box-sizing:border-box;width:318px;height:35px;margin:0 0 6px 5px;border:1px solid #b0b0b0;padding:0 8px 4px;font:15px "Open Sans",sans-serif;outline:0}
input::placeholder{color:#666;opacity:1}
.h{display:flex;height:35px}
.h span{width:36px;display:flex;align-items:center;justify-content:center}
.h b{flex:1;background:#ebebeb;padding-left:11px;line-height:35px;color:#666;font-size:17px}
.p{all:unset;display:block;height:38px;padding:6px 0 0 45px}
hr{border:0;border-top:1px solid #ddd;margin:0 0 2px 47px}
</style><input type="search" placeholder="Search the menus" aria-label="Search the menus">
<menu-item icon="cut">Cu<u>t</u></menu-item><menu-item icon="copy" active><u>C</u>opy</menu-item>
<div class="h"><span>${icon('pasteS')}</span><b>Paste Options:</b></div><button class="p" aria-label="Keep text only">${icon('pasteA')}</button><hr>
<menu-item icon="fontA"><u>F</u>ont...</menu-item><menu-item icon="para"><u>P</u>aragraph...</menu-item><hr>
<menu-item submenu>S<u>y</u>nonyms</menu-item><menu-item icon="read"><u>R</u>ead Aloud</menu-item><menu-item icon="translate">Tran<u>s</u>late</menu-item><hr>
<menu-item icon="link">L<u>i</u>nk</menu-item><menu-item icon="commentS">New Co<u>m</u>ment</menu-item>`);

define('word-app', `<style>
:host{display:flex;flex-direction:column;height:100vh;position:relative}
mini-toolbar{position:absolute;left:1115px;top:268px}
context-menu{position:absolute;left:1115px;top:387px}
.mark{position:absolute;right:20px;bottom:43px;font:bold 88px/100px Lato,sans-serif;color:#3600ff}
</style><title-bar></title-bar><word-ribbon></word-ribbon><doc-workspace></doc-workspace><status-bar></status-bar><mini-toolbar></mini-toolbar><context-menu></context-menu><div class="mark">Asifah.com</div>`);
</script>
</body>
</html>
